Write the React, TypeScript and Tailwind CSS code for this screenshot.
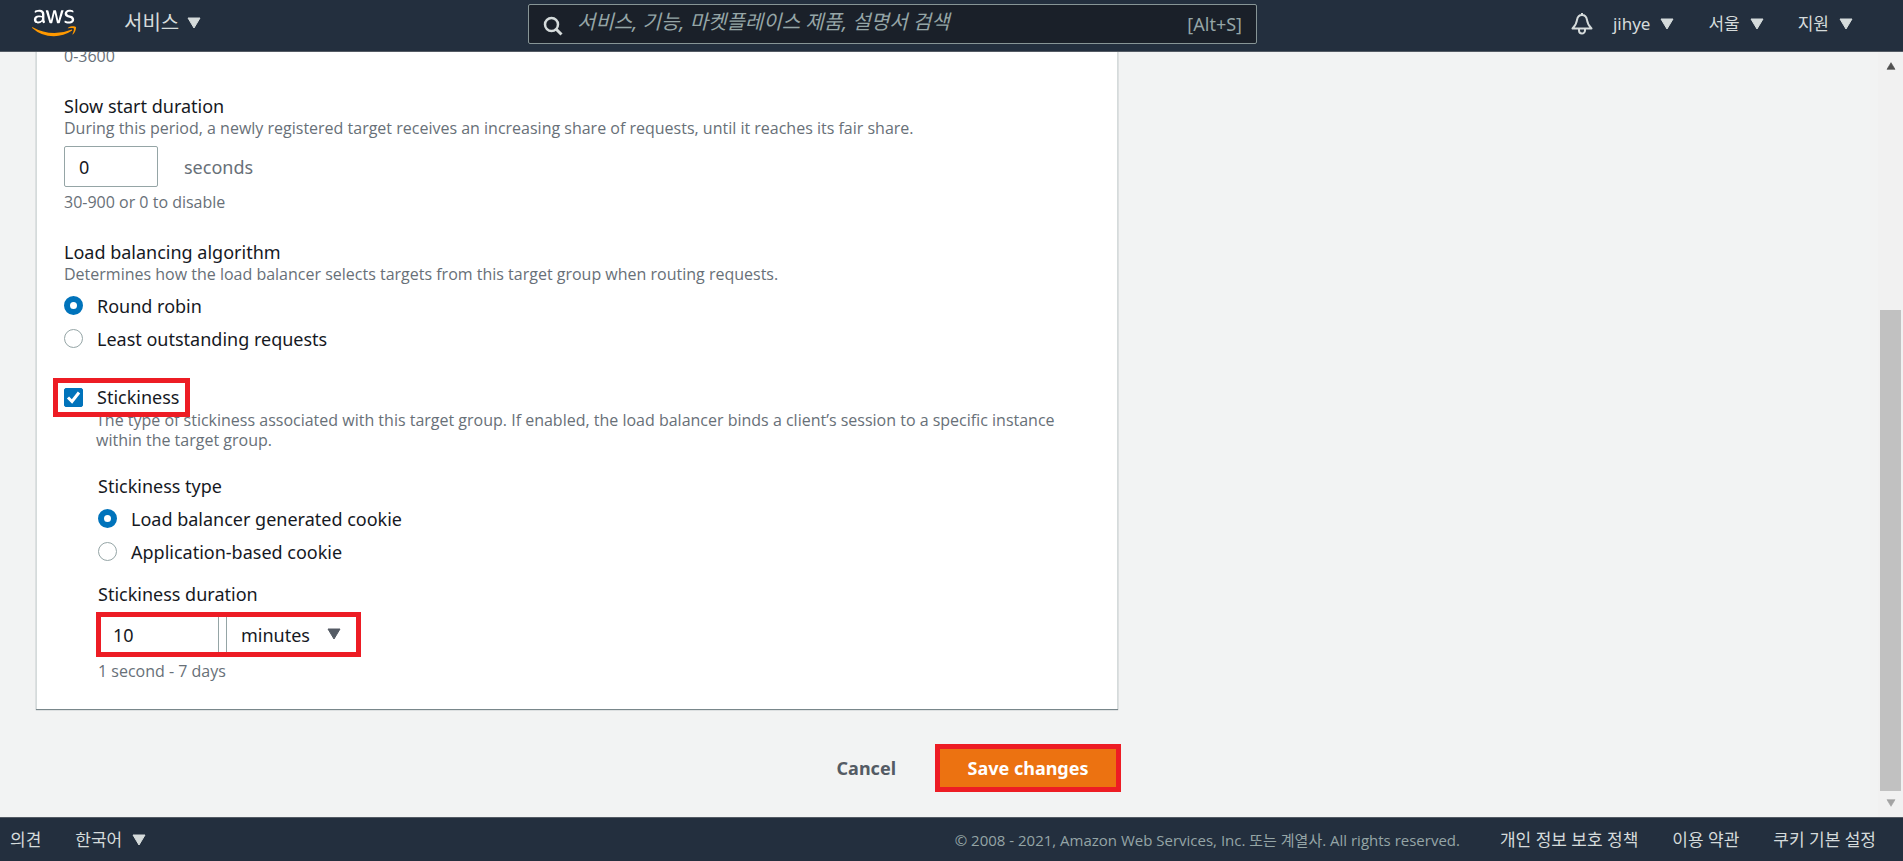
import { useState } from "react"
import type { ReactNode } from "react"
import { FaAws } from "react-icons/fa"

function Caret({ className }: { className: string }) {
  return (
    <svg viewBox="0 0 14 12" className={className} fill="currentColor" stroke="currentColor" aria-hidden="true">
      <path d="M1 1h12L7 11z" strokeLinejoin="round" />
    </svg>
  )
}

function NavMenu({ label }: { label: string }) {
  return (
    <button type="button" className="flex items-center gap-2.5 text-[17px] leading-6">
      {label}
      <Caret className="h-3 w-3.5" />
    </button>
  )
}

// Red marker frame laid over a control
function Highlight({ className }: { className: string }) {
  return <span aria-hidden="true" className={`pointer-events-none absolute border-5 border-[#ed1c24] ${className}`} />
}

function Hint({ children }: { children: ReactNode }) {
  return <p className="font-['Open_Sans',sans-serif] text-base leading-5 text-[#687078]">{children}</p>
}

type RadioProps = {
  name: string
  label: string
  checked: boolean
  onChange: () => void
}

function Radio({ name, label, checked, onChange }: RadioProps) {
  return (
    <label className="flex h-[33px] items-center gap-3.5">
      <input
        type="radio"
        name={name}
        checked={checked}
        onChange={onChange}
        className="size-[19px] shrink-0 appearance-none rounded-full border border-[#95a5a6] bg-white checked:border-6 checked:border-[#0073bb]"
      />
      {label}
    </label>
  )
}

export default function App() {
  const [algorithm, setAlgorithm] = useState("round-robin")
  const [stickiness, setStickiness] = useState(true)
  const [cookie, setCookie] = useState("generated")

  return (
    <div className="flex h-screen flex-col bg-[#f2f3f3] font-['Noto_Sans','Noto_Sans_CJK_KR',sans-serif] text-lg leading-6 text-[#16191f]">
      {/* Top bar */}
      <header className="flex h-[52px] shrink-0 items-start border-b border-[#545b64] bg-[#232f3e] pr-[50px] text-[#d5dbdb]">
        <div className="flex w-[528px] shrink-0 items-center gap-12 pl-8">
          <a href="#" aria-label="AWS" className="relative mt-[5px] h-9 w-11">
            <FaAws className="absolute inset-0 h-9 w-11 text-white [clip-path:inset(0_0_43%_0)]" />
            <FaAws className="absolute inset-0 h-9 w-11 text-[#f90] [clip-path:inset(57%_0_0_0)]" />
          </a>
          <button type="button" className="flex items-center gap-2 pt-1 text-xl">
            서비스
            <Caret className="h-3 w-3.5" />
          </button>
        </div>

        <div className="mt-1 flex h-10 max-w-[729px] flex-1 items-center rounded-xs border border-[#879596] bg-[#1a2029] px-3.5 text-[#95a5a6]">
          <svg viewBox="0 0 20 20" className="mt-1 size-5 text-[#d5dbdb]" fill="none" stroke="currentColor" aria-hidden="true">
            <circle cx="8.5" cy="8.5" r="6.5" strokeWidth="2.5" />
            <path d="M13 13l5.5 5.5" strokeWidth="3" />
          </svg>
          <input
            type="search"
            aria-label="검색"
            placeholder="서비스, 기능, 마켓플레이스 제품, 설명서 검색"
            className="min-w-0 flex-1 bg-transparent px-3.5 pb-1 text-xl italic outline-none placeholder:text-[#95a5a6]"
          />
          <span>[Alt+S]</span>
        </div>

        <nav className="ml-auto flex h-[47px] items-center gap-[34px]">
          <div className="flex items-center gap-5">
            <button type="button" aria-label="알림">
              <svg viewBox="0 0 22 22" className="size-[22px]" fill="none" stroke="currentColor" strokeWidth="2" strokeLinejoin="round" aria-hidden="true">
                <path d="M11 0v2M11 2C8 2 6.500 4 6 7C5.500 11 4.500 12.500 1.500 15.500H20.500C17.500 12.500 16.500 11 16 7C15.500 4 14 2 11 2z" />
                <path d="M8 15.500v2a3 3 0 0 0 6 0v-2" />
              </svg>
            </button>
            <NavMenu label="jihye" />
          </div>
          <NavMenu label="서울" />
          <NavMenu label="지원" />
        </nav>
      </header>

      <div className="flex min-h-0 flex-1">
        {/* Settings form, resting at the end of its scroll */}
        <main className="flex min-w-0 flex-1 flex-col justify-end overflow-hidden pb-[25px] pl-9">
          <form className="w-full max-w-[1082px]" onSubmit={(e) => e.preventDefault()}>
            <div className="border-x border-[#d5dbdb] bg-white px-[27px] pb-7 shadow-[0_1px_1px_0_rgba(0,28,36,0.5)]">
              <Hint>0-3600</Hint>

              <section className="mt-7">
                <label htmlFor="slow-start">Slow start duration</label>
                <Hint>
                  During this period, a newly registered target receives an increasing share of requests, until it
                  reaches its fair share.
                </Hint>
                <div className="mt-2 mb-[5px] flex items-center gap-[26px] text-[#687078]">
                  <input
                    id="slow-start"
                    defaultValue="0"
                    className="h-[41px] w-[94px] rounded-xs border border-[#95a5a6] px-3.5 text-[#16191f]"
                  />
                  seconds
                </div>
                <Hint>30-900 or 0 to disable</Hint>
              </section>

              <fieldset className="mt-7">
                <legend>Load balancing algorithm</legend>
                <Hint>
                  Determines how the load balancer selects targets from this target group when routing requests.
                </Hint>
                <div className="mt-[5px]">
                  <Radio
                    name="algorithm"
                    label="Round robin"
                    checked={algorithm === "round-robin"}
                    onChange={() => setAlgorithm("round-robin")}
                  />
                  <Radio
                    name="algorithm"
                    label="Least outstanding requests"
                    checked={algorithm === "least"}
                    onChange={() => setAlgorithm("least")}
                  />
                </div>
              </fieldset>

              <section className="mt-[30px]">
                <label className="relative flex w-fit items-center gap-3.5">
                  <span className="grid place-items-center">
                    <input
                      type="checkbox"
                      checked={stickiness}
                      onChange={(e) => setStickiness(e.target.checked)}
                      className="col-start-1 row-start-1 size-[19px] appearance-none rounded-xs border border-[#95a5a6] checked:border-[#0073bb] checked:bg-[#0073bb]"
                    />
                    <svg viewBox="0 0 19 19" className="pointer-events-none col-start-1 row-start-1 size-[19px]" fill="none" stroke="white" strokeWidth="3" aria-hidden="true">
                      <path d="M4 9.500l4 4 7-9" />
                    </svg>
                  </span>
                  Stickiness
                  <Highlight className="-inset-x-[11px] -top-[7px] -bottom-2 z-10" />
                </label>

                <div className="mt-px pl-8">
                  <Hint>
                    The type of stickiness associated with this target group. If enabled, the load balancer binds a
                    client’s session to a specific instance <br />
                    within the target group.
                  </Hint>

                  <fieldset className="mt-6 pl-0.5">
                    <legend>Stickiness type</legend>
                    <div className="mt-1">
                      <Radio
                        name="cookie"
                        label="Load balancer generated cookie"
                        checked={cookie === "generated"}
                        onChange={() => setCookie("generated")}
                      />
                      <Radio
                        name="cookie"
                        label="Application-based cookie"
                        checked={cookie === "application"}
                        onChange={() => setCookie("application")}
                      />
                    </div>
                  </fieldset>

                  <div className="mt-3.5 pl-0.5">
                    <label htmlFor="duration">Stickiness duration</label>
                    <div className="relative mt-2 mb-1.5 flex w-fit gap-[7px]">
                      <input
                        id="duration"
                        defaultValue="10"
                        className="h-[41px] w-[121px] rounded-xs border border-[#95a5a6] px-3.5"
                      />
                      <div className="relative">
                        <select
                          aria-label="Duration unit"
                          defaultValue="minutes"
                          className="h-[41px] w-[133px] appearance-none rounded-xs border border-[#95a5a6] bg-white px-3.5"
                        >
                          <option>seconds</option>
                          <option>minutes</option>
                          <option>hours</option>
                          <option>days</option>
                        </select>
                        <Caret className="pointer-events-none absolute top-3.5 right-[18px] h-3 w-3.5 text-[#545b64]" />
                      </div>
                      <Highlight className="-inset-0.5" />
                    </div>
                    <Hint>1 second - 7 days</Hint>
                  </div>
                </div>
              </section>
            </div>

            <div className="mt-10 mb-[5px] flex items-center justify-end gap-11 pr-0.5 font-bold">
              <button type="button" className="text-[#545b64]">
                Cancel
              </button>
              <button type="submit" className="h-[38px] w-44 bg-[#ec7211] text-white ring-5 ring-[#ed1c24]">
                Save changes
              </button>
            </div>
          </form>
        </main>

        {/* Scroll bar */}
        <div aria-hidden="true" className="flex w-[25px] shrink-0 flex-col items-center bg-[#f1f1f1] py-2.5">
          <Caret className="h-2 w-3 rotate-180 text-[#505050]" />
          <div className="flex-240" />
          <div className="mb-2 w-[21px] flex-481 bg-[#c1c1c1]" />
          <Caret className="h-2 w-3 text-[#a3a3a3]" />
        </div>
      </div>

      {/* Bottom bar */}
      <footer className="flex h-11 shrink-0 items-center border-t border-[#545b64] bg-[#232f3e] pr-[27px] pl-2.5 text-[17px] leading-6 text-[#d5dbdb]">
        <div className="flex items-center gap-[34px]">
          <a href="#">의견</a>
          <NavMenu label="한국어" />
        </div>
        <div className="ml-auto flex items-center gap-[34px]">
          <span className="mr-1.5 font-['Open_Sans','Noto_Sans_CJK_KR',sans-serif] text-[15px] text-[#95a5a6]">
            © 2008 - 2021, Amazon Web Services, Inc. 또는 계열사. All rights reserved.
          </span>
          <a href="#">개인 정보 보호 정책</a>
          <a href="#">이용 약관</a>
          <a href="#">쿠키 기본 설정</a>
        </div>
      </footer>
    </div>
  )
}
